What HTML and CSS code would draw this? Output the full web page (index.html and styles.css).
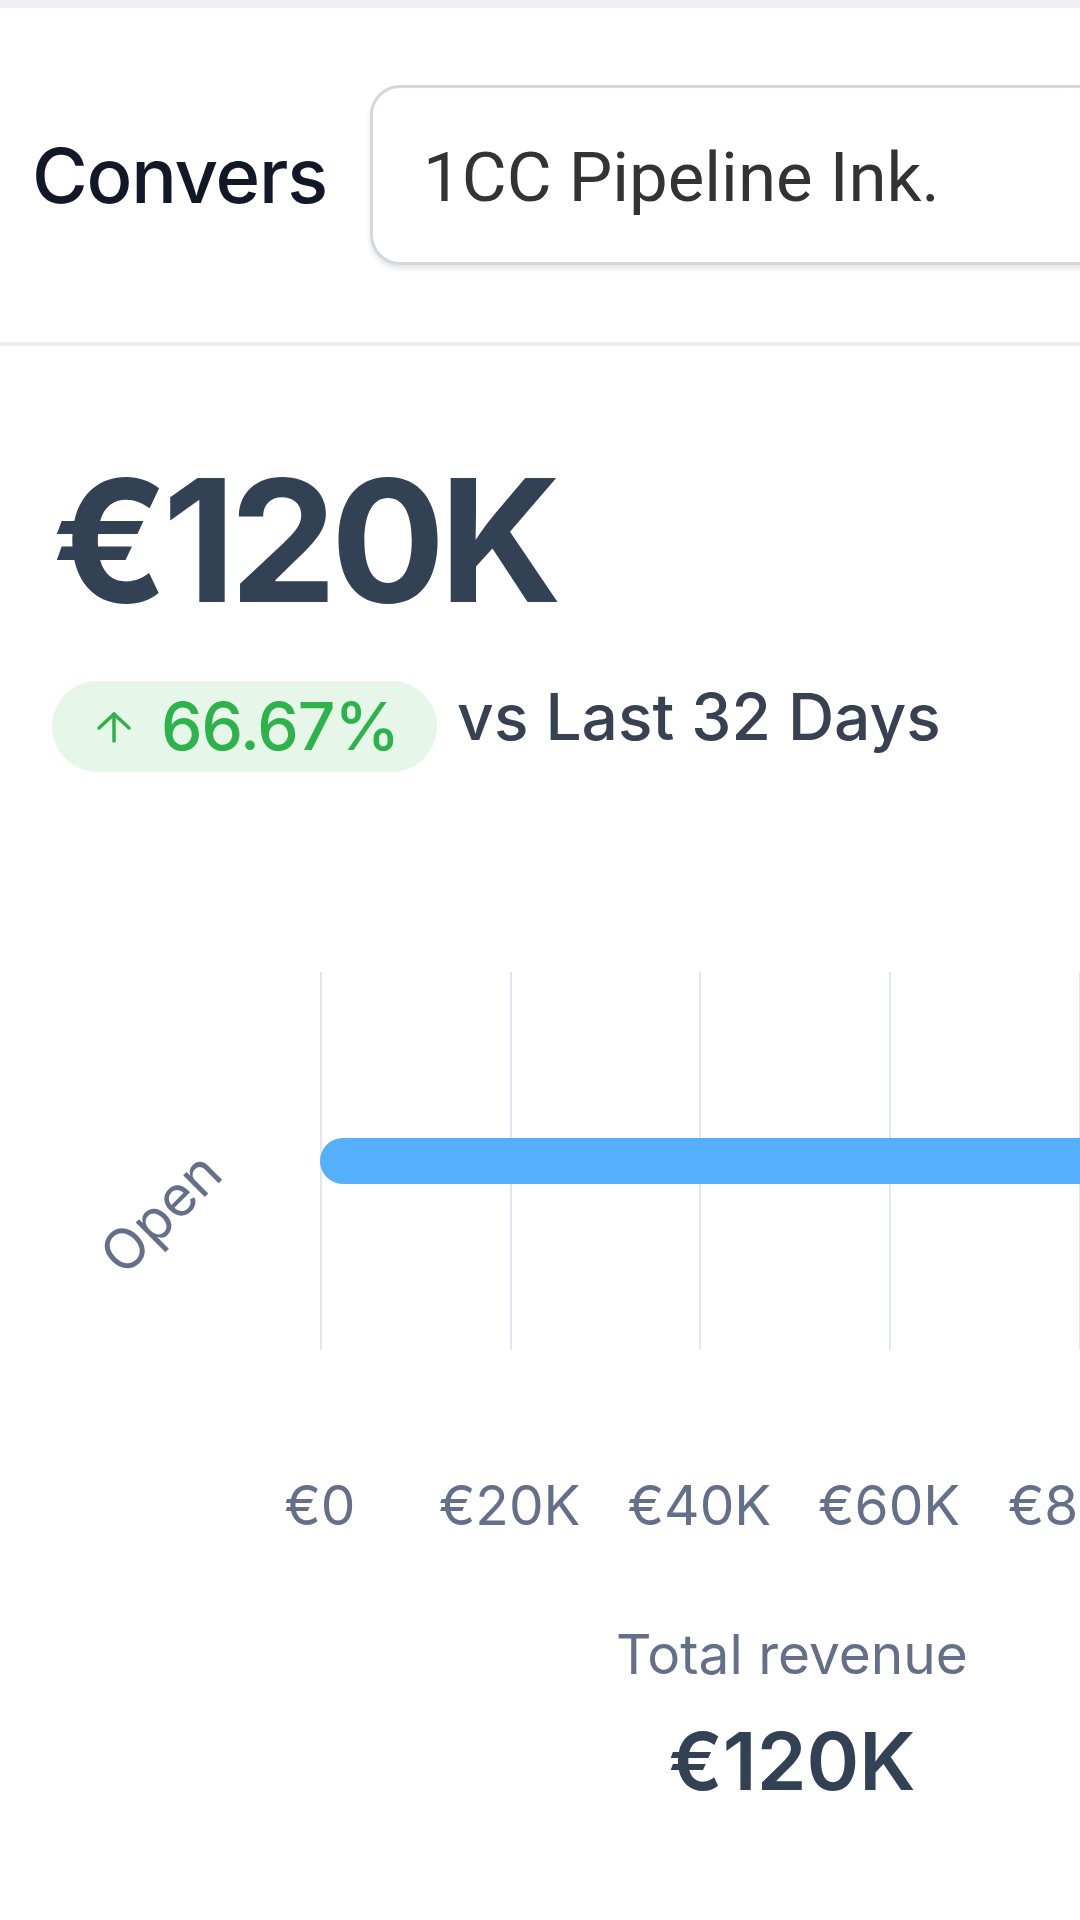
FILE: index.html
```html
<!DOCTYPE html>
<html lang="en">
<head>
<meta charset="utf-8">
<title>Revenue</title>
<link rel="stylesheet" href="styles.css">
</head>
<body>
  <div class="topbar"></div>
  <header class="header">
    <span class="header-label">Convers</span>
    <div class="select"><span class="select-text">1CC Pipeline Ink.</span></div>
  </header>
  <div class="divider"></div>

  <main class="content">
    <div class="big-number">€120K</div>
    <div class="trend-row">
      <span class="badge">
        <svg class="badge-arrow" width="36" height="32" viewBox="0 0 36 32" fill="none" stroke="currentColor" stroke-width="3.5" stroke-linecap="round" stroke-linejoin="round">
          <path d="M18 30 V3"/>
          <path d="M3 17 L18 3 L33 17"/>
        </svg>
        <span class="badge-value">66.67%</span>
      </span>
      <span class="trend-text">vs Last 32 Days</span>
    </div>
  </main>

  <section class="chart">
    <div class="plot-row">
      <div class="ylabels"><span class="ylabel">Open</span></div>
      <div class="plot">
        <div class="bar" style="width: 1138.5px"></div>
      </div>
    </div>
    <div class="xlabels">
      <span class="xlabel">€0</span>
      <span class="xlabel">€20K</span>
      <span class="xlabel">€40K</span>
      <span class="xlabel">€60K</span>
      <span class="xlabel">€80K</span>
    </div>
    <div class="total">
      <div class="total-label">Total revenue</div>
      <div class="total-value">€120K</div>
    </div>
  </section>
</body>
</html>
```
FILE: styles.css
```css
html, body {
  margin: 0;
  padding: 0;
  background: #ffffff;
}
body {
  width: 1080px;
  height: 1920px;
  overflow: hidden;
  font-family: "Inter", "Noto Sans", sans-serif;
}

.topbar {
  height: 8px;
  background: #eef0f3;
}

.header {
  height: 334px;
  display: flex;
  align-items: center;
  padding-left: 32px;
  gap: 43px;
  white-space: nowrap;
}
.header-label {
  font-size: 76px;
  line-height: 1;
  font-weight: 500;
  color: #111827;
  letter-spacing: -1.2px;
  flex: none;
}
.select {
  flex: none;
  width: 1000px;
  height: 180px;
  box-sizing: border-box;
  border: 3px solid #d3d7df;
  border-radius: 30px;
  box-shadow: 0 4px 5px rgba(15, 23, 42, 0.10);
  display: flex;
  align-items: center;
  padding-left: 50px;
  padding-top: 5px;
  background: #fff;
}
.select-text {
  font-family: "Roboto", "Liberation Sans", sans-serif;
  font-size: 69px;
  line-height: 1;
  color: #333333;
}

.divider {
  height: 4px;
  background: #ebebf0;
}

.content {
  padding-left: 52px;
  padding-top: 109px;
}
.big-number {
  font-size: 170px;
  line-height: 1;
  font-weight: 700;
  color: #334155;
  letter-spacing: -6px;
}
.trend-row {
  margin-top: 56px;
  display: flex;
  align-items: flex-start;
  gap: 20px;
}
.badge {
  height: 91px;
  border-radius: 46px;
  background: #e6f6e8;
  color: #2eb24c;
  display: flex;
  align-items: center;
  padding: 0 38px 0 44px;
  gap: 29px;
}
.badge-arrow {
  display: block;
  margin-top: 1px;
}
.badge-value {
  font-size: 66px;
  line-height: 91px;
  font-weight: 500;
  letter-spacing: -1px;
}
.trend-text {
  font-size: 64px;
  line-height: 91px;
  font-weight: 500;
  color: #374151;
  margin-top: -10px;
}

.chart {
  width: 1584px;
  margin-top: 200px;
}
.plot-row {
  display: flex;
  height: 378px;
}
.ylabels {
  width: 320px;
  flex: none;
  display: flex;
  align-items: center;
  justify-content: center;
}
.ylabel {
  font-size: 56px;
  line-height: 1;
  color: #64708a;
  transform: translateY(52px) rotate(-45deg);
}
.plot {
  flex: 1;
  background: repeating-linear-gradient(to right, #e1e6ef 0 2px, transparent 2px 189.75px);
  padding-top: 166px;
  box-sizing: border-box;
}
.bar {
  height: 46px;
  border-radius: 23px;
  background: #55affd;
}

.xlabels {
  display: flex;
  padding-left: 225px;
  margin-top: 128px;
}
.xlabel {
  flex: none;
  width: 189.75px;
  text-align: center;
  font-size: 55px;
  line-height: 1;
  color: #64708a;
}

.total {
  margin-top: 94px;
  text-align: center;
}
.total-label {
  font-size: 55px;
  line-height: 1;
  color: #64708a;
}
.total-value {
  margin-top: 39px;
  font-size: 80px;
  line-height: 1;
  font-weight: 600;
  color: #334155;
}
```
